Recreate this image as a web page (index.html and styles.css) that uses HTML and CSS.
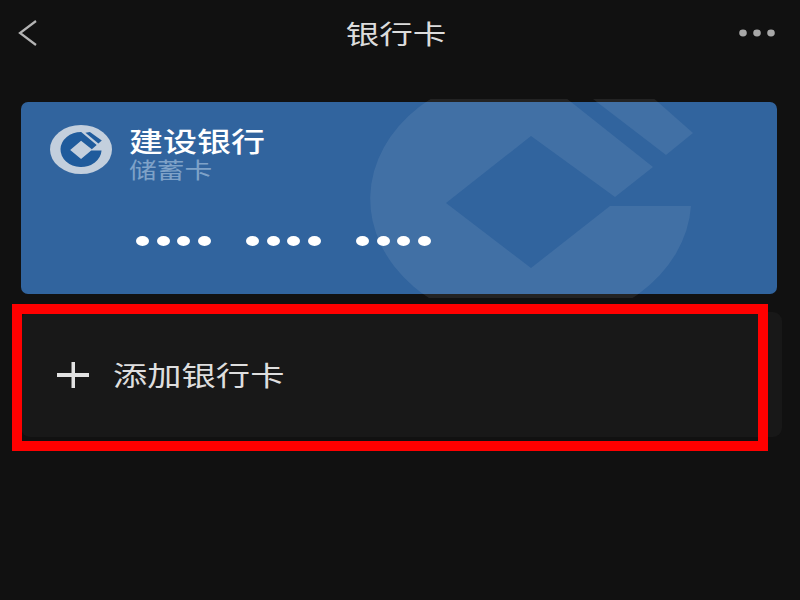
FILE: index.html
```html
<!DOCTYPE html>
<html lang="zh-CN">
<head>
<meta charset="utf-8">
<title>银行卡</title>
<link rel="stylesheet" href="styles.css">
</head>
<body>
<div class="page">
  <header class="topbar">
    <svg class="back" viewBox="0 0 20 28" width="20" height="28"><polyline points="18,2 2,14 18,26" fill="none" stroke="#b4b4b4" stroke-width="2.2"/></svg>
    <h1 class="title">银行卡</h1>
    <svg class="more" viewBox="0 0 36 8" width="36" height="8"><ellipse cx="4" cy="4" rx="3.800" ry="3.400" fill="#a8a8a8"/><ellipse cx="18" cy="4" rx="3.800" ry="3.400" fill="#a8a8a8"/><ellipse cx="32" cy="4" rx="3.800" ry="3.400" fill="#a8a8a8"/></svg>
  </header>

  <section class="card">
    <svg class="watermark" viewBox="21 102 756 192" width="756" height="192">
      <defs><clipPath id="wm-clip"><rect x="360" y="99" width="345" height="199" rx="6"/></clipPath></defs>
      <g clip-path="url(#wm-clip)" fill="#fff" fill-opacity=".08">
        <path d="M653 167 L615 197 L531 136 L446 203 L531 268 L610 206 L691 206 A160.500 128 0 1 1 532 71 Z"/>
        <path d="M593 99 L650 95 L693 133 L666 155 Z"/>
      </g>
    </svg>
    <div class="card-head">
      <svg class="logo" viewBox="0 0 62 49" width="62" height="49">
        <ellipse cx="31" cy="24.500" rx="31" ry="24.500" fill="#c3cfdd"/>
        <g transform="translate(31 24.500) scale(.128 .137) translate(-530.500 -199)" fill="#1f5b9c">
          <path d="M653 167 L615 197 L531 136 L446 203 L531 268 L610 206 L691 206 A160.500 128 0 1 1 532 71 Z"/>
          <path d="M565 77 L600 72 L693 133 L666 155 Z"/>
        </g>
      </svg>
      <div class="card-names">
        <div class="bank">建设银行</div>
        <div class="kind">储蓄卡</div>
      </div>
    </div>
    <div class="number">
      <div class="group"><i class="dot"></i><i class="dot"></i><i class="dot"></i><i class="dot"></i></div>
      <div class="group"><i class="dot"></i><i class="dot"></i><i class="dot"></i><i class="dot"></i></div>
      <div class="group"><i class="dot"></i><i class="dot"></i><i class="dot"></i><i class="dot"></i></div>
    </div>
  </section>

  <section class="add">
    <svg class="plus" viewBox="0 0 32 26" width="32" height="26"><rect x="0" y="11" width="32" height="4" fill="#e2e2e2"/><rect x="14.500" y="0" width="3.500" height="26" fill="#e2e2e2"/></svg>
    <span class="add-label">添加银行卡</span>
    <div class="highlight"></div>
  </section>
</div>
</body>
</html>
```
FILE: styles.css
```css
* { box-sizing: border-box; }
html, body { margin: 0; padding: 0; }
body {
  width: 800px;
  height: 600px;
  overflow: hidden;
  background: #111111;
  font-family: "Noto Sans CJK SC", "Noto Sans", sans-serif;
}
.page { display: flex; flex-direction: column; padding-left: 21px; }

.topbar {
  display: grid;
  grid-template-columns: 1fr auto 1fr;
  align-items: center;
  height: 66px;
  margin-left: -21px;
  padding: 0 25px 0 18px;
}
.back { justify-self: start; }
.more { justify-self: end; }
.title {
  margin: 0;
  font-size: 26px;
  line-height: 34px;
  font-weight: 400;
  color: #dcdcdc;
  transform: scaleX(1.29);
}

.card {
  position: relative;
  width: 756px;
  height: 192px;
  margin-top: 36px;
  padding: 23px 0 0 29px;
  background: #31649e;
  border-radius: 7px;
}
.watermark { position: absolute; left: 0; top: 0; overflow: visible; }
.card-head { position: relative; display: flex; gap: 17px; }
.logo { flex: none; }
.card-names { display: flex; flex-direction: column; }
.bank, .kind { transform-origin: left center; transform: scaleX(1.26); white-space: nowrap; }
.bank { font-size: 27px; line-height: 31px; font-weight: 500; color: #ffffff; }
.kind { font-size: 22px; line-height: 25px; color: #7fa2c8; }

.number { position: relative; display: flex; gap: 35.500px; margin: 55px 0 0 86px; }
.group { display: flex; gap: 7.500px; }
.dot { width: 13px; height: 10px; border-radius: 50%; background: #ffffff; }

.add {
  position: relative;
  display: flex;
  align-items: center;
  gap: 24px;
  width: 761px;
  height: 125px;
  margin-top: 18px;
  padding-left: 36px;
  background: #181818;
  border-radius: 9px;
}
.plus { flex: none; }
.add-label {
  font-size: 27px;
  line-height: 34px;
  color: #dedede;
  transform-origin: left center;
  transform: scaleX(1.27);
  white-space: nowrap;
}
.highlight {
  position: absolute;
  left: -9px;
  top: -8px;
  width: 756px;
  height: 147px;
  border: 10px solid #ff0000;
}
```
